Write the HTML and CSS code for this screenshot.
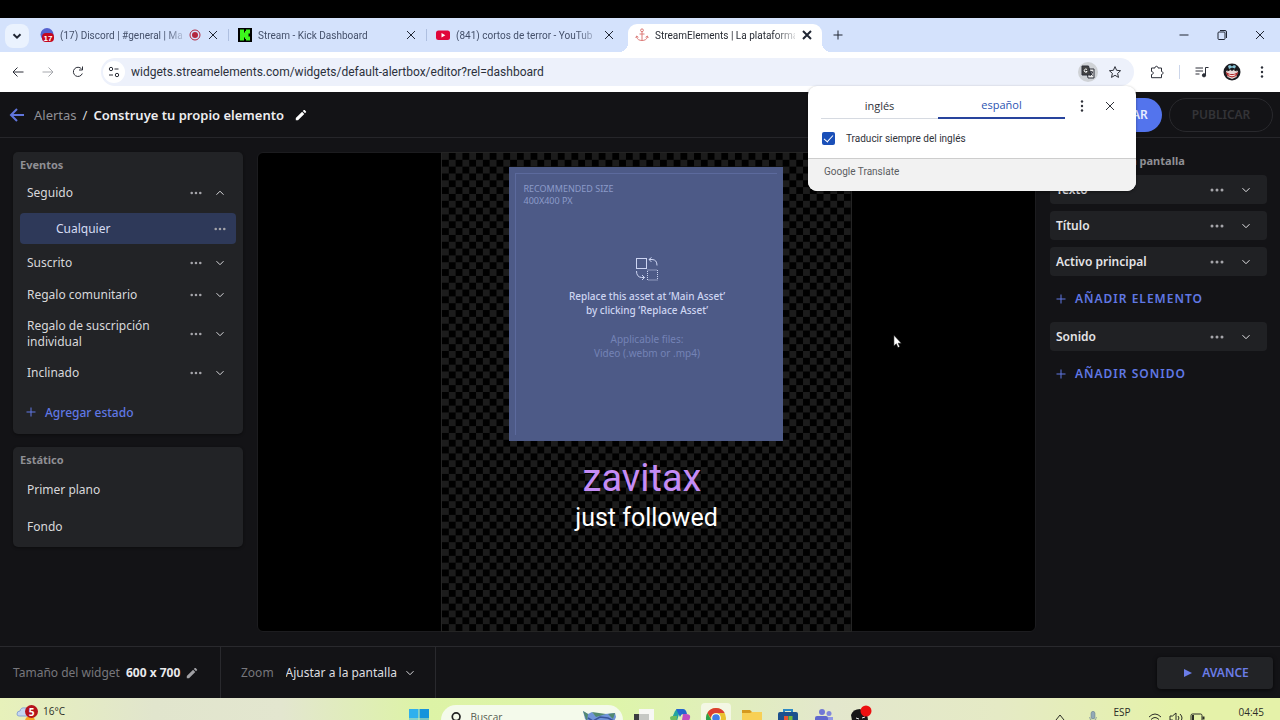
FILE: index.html
```html
<!DOCTYPE html>
<html lang="es">
<head>
<meta charset="utf-8">
<title>StreamElements | La plataforma</title>
<link rel="stylesheet" href="styles.css">
</head>
<body>
<svg class="defs" width="0" height="0" aria-hidden="true">
  <symbol id="x" viewBox="0 0 12 12"><path d="M2 2l8 8M10 2l-8 8"/></symbol>
  <symbol id="down" viewBox="0 0 12 12"><path d="M2.500 4.200L6 7.700l3.500-3.500"/></symbol>
  <symbol id="up" viewBox="0 0 12 12"><path d="M2.500 7.700L6 4.200l3.500 3.500"/></symbol>
  <symbol id="dots" viewBox="0 0 14 4"><g fill="currentColor" stroke="none"><circle cx="2" cy="2" r="1.500"/><circle cx="7" cy="2" r="1.500"/><circle cx="12" cy="2" r="1.500"/></g></symbol>
  <symbol id="vdots" viewBox="0 0 4 14"><g fill="currentColor" stroke="none"><circle cx="2" cy="2.500" r="1.200"/><circle cx="2" cy="7" r="1.200"/><circle cx="2" cy="11.500" r="1.200"/></g></symbol>
  <symbol id="plus" viewBox="0 0 12 12"><path d="M6 1.500v9M1.500 6h9"/></symbol>
  <symbol id="pencil" viewBox="0 0 12 12"><path fill="currentColor" stroke="none" d="M.8 9.100v2.200H3L9.300 5 7.100 2.800zM11 3.300c.3-.3.3-.6 0-.9L9.700 1.100c-.3-.3-.6-.3-.9 0L7.800 2.100 10 4.300z"/></symbol>
</svg>
<div class="screen">
  <div class="tabstrip">
    <button class="tab-search" aria-label="Buscar pestañas"><svg class="i12"><use href="#down"/></svg></button>
    <div class="tab">
      <svg class="fav" viewBox="0 0 14 14"><circle cx="7" cy="6.500" r="6.500" fill="#5662cf"/><rect x="2" y="5" width="12" height="9" rx="4" fill="#c4071f"/><text x="8" y="12.500" text-anchor="middle" class="fav-count">17</text></svg>
      <span class="tab-title">(17) Discord | #general | Ma</span>
      <svg class="rec" viewBox="0 0 12 12"><circle cx="6" cy="6" r="5" fill="none" stroke="#b3263e"/><circle cx="6" cy="6" r="3" fill="#b3263e"/></svg>
      <button class="close" aria-label="Cerrar"><svg class="i12"><use href="#x"/></svg></button>
    </div>
    <div class="tab">
      <svg class="fav" viewBox="0 0 14 14"><path fill="#000" d="M0 0h14v14H0z"/><path fill="#3df51d" d="M2 1.500h4v3h1V3h1V1.500h4v4h-1.500v3H12v4H8V11H7V9.500H6v3H2z"/></svg>
      <span class="tab-title">Stream - Kick Dashboard</span>
      <button class="close" aria-label="Cerrar"><svg class="i12"><use href="#x"/></svg></button>
    </div>
    <div class="tab plain">
      <svg class="fav" viewBox="0 0 14 14"><rect y="2.500" width="14" height="9.500" rx="2.500" fill="#e0063a"/><path fill="#fff" d="M5.500 5v4.500L9.300 7.200z"/></svg>
      <span class="tab-title">(841) cortos de terror - YouTub</span>
      <button class="close" aria-label="Cerrar"><svg class="i12"><use href="#x"/></svg></button>
    </div>
    <div class="tab active">
      <svg class="fav anchor" viewBox="0 0 14 14"><circle cx="7" cy="2.300" r="1.400"/><path d="M7 4v8.500M4.500 6h5M1.500 8.500c.5 3 3 4 5.500 4s5-1 5.500-4M.8 10l.8-2 1.800 1.300M13.200 10l-.8-2-1.800 1.300"/></svg>
      <span class="tab-title">StreamElements | La plataforma</span>
      <button class="close" aria-label="Cerrar"><svg class="i12"><use href="#x"/></svg></button>
    </div>
    <button class="new-tab" aria-label="Nueva pestaña"><svg class="i12"><use href="#plus"/></svg></button>
    <div class="window-controls">
      <button aria-label="Minimizar"><svg class="i12" viewBox="0 0 12 12"><path d="M1.500 6h9"/></svg></button>
      <button aria-label="Restaurar"><svg class="i12" viewBox="0 0 12 12"><rect x="2" y="3" width="7" height="7.500" rx="1"/><path d="M4 1.500h5q1.500 0 1.500 1.500v6"/></svg></button>
      <button aria-label="Cerrar ventana"><svg class="i12" viewBox="0 0 12 12"><path d="M2 2l8 8M10 2l-8 8"/></svg></button>
    </div>
  </div>

  <div class="toolbar">
    <button aria-label="Atrás"><svg class="i14" viewBox="0 0 14 14"><path d="M12.500 7H2M6.500 2.500L2 7l4.500 4.500"/></svg></button>
    <button class="off" aria-label="Adelante"><svg class="i14" viewBox="0 0 14 14"><path d="M1.500 7H12M7.500 2.500L12 7l-4.500 4.500"/></svg></button>
    <button aria-label="Recargar"><svg class="i14" viewBox="0 0 14 14"><path d="M11.300 8.500A4.600 4.600 0 1 1 10.600 4M11.500 1.500v3.500H8"/></svg></button>
    <div class="omnibox">
      <button class="site" aria-label="Información del sitio"><svg class="i14" viewBox="0 0 14 14"><circle cx="4" cy="4" r="1.700"/><path d="M7.500 4h4M2 10h4"/><circle cx="10" cy="10" r="1.700"/></svg></button>
      <input class="url" type="text" aria-label="Dirección" value="widgets.streamelements.com/widgets/default-alertbox/editor?rel=dashboard">
      <button class="translate" aria-label="Traducir"><svg class="i14" viewBox="0 0 14 14"><path d="M5.500 4h7.500v9H7z" fill="#ececec"/><path d="M1 1h6.500l2.500 9H1z" fill="#444"/><path d="M6 4.500a1.600 1.600 0 1 0 .2 2H4.800" stroke="#fff"/><path d="M8.500 7H12M10.200 6v1M11.500 7c-.3 1.500-1 2.600-2 3.500M9.500 8l2.300 2.700"/></svg></button>
      <button class="star" aria-label="Favorito"><svg class="i14" viewBox="0 0 14 14"><path d="M7 1.600l1.600 3.700 4 .4-3 2.700.9 4L7 10.300l-3.500 2.100.9-4-3-2.700 4-.4z"/></svg></button>
    </div>
    <button class="puzzle" aria-label="Extensiones"><svg class="i14" viewBox="0 0 14 14"><path d="M1.500 3H5c-.3-2.300 3.300-2.300 3 0h3.500v3.500c2 0 2 3 0 3v3.200h-10V9.500c2.300 0 2.300-3 0-3z"/></svg></button>
    <span class="bar-sep"></span>
    <button class="media" aria-label="Multimedia"><svg class="i14" viewBox="0 0 14 14"><path d="M.5 3h7.500M.5 6h7.500M.5 9h4M10.500 10V2.500h3"/><circle cx="9" cy="10.300" r="1.600" fill="currentColor"/></svg></button>
    <button class="avatar" aria-label="Perfil"><svg viewBox="0 0 18 18"><circle cx="9" cy="9" r="8.500" fill="#1a1b20"/><path d="M5 3l2-1 2 1.500L11 2l2 1-1 2.500L9 4.500 6 6z" fill="#86c4d6"/><path d="M3 8l4-1.500L9 8l2-1.500L15 8l-1.500 6L9 16l-4.500-2z" fill="#e8d9d7"/><path d="M2.500 9l4.500 2h4l4.500-2-2 4L9 14.500 4.500 13z" fill="#b22c2c"/><path d="M5.500 11.800l3.500 1 3.500-1" stroke="#fff"/><path d="M4.500 5.500l3 1.500-3 1.500zM13.500 5.500l-3 1.500 3 1.500z" fill="#151515"/></svg></button>
    <button aria-label="Menú"><svg class="v14"><use href="#vdots"/></svg></button>

    <section class="popup" aria-label="Traductor">
      <div class="popup-top">
        <div class="langs"><button>inglés</button><button class="sel">español</button></div>
        <button class="pbtn" aria-label="Opciones"><svg class="v14"><use href="#vdots"/></svg></button>
        <button class="pbtn" aria-label="Cerrar"><svg class="i12"><use href="#x"/></svg></button>
      </div>
      <label class="always"><input type="checkbox" checked><span>Traducir siempre del inglés</span></label>
      <div class="brand"><span>Google</span> Translate</div>
    </section>
  </div>

  <div class="app">
    <header class="head">
      <button class="back" aria-label="Volver"><svg viewBox="0 0 16 16"><path d="M15 8H2M8 2L2 8l6 6"/></svg></button>
      <nav class="crumbs"><a href="#">Alertas</a><span>/</span><h1>Construye tu propio elemento</h1></nav>
      <button class="edit" aria-label="Editar nombre"><svg class="i12"><use href="#pencil"/></svg></button>
      <div class="actions"><button class="save">GUARDAR</button><button class="publish" disabled>PUBLICAR</button></div>
    </header>

    <main class="work">
      <aside class="left">
        <section class="panel events">
          <h2>Eventos</h2>
          <div class="row"><span>Seguido</span><button aria-label="Más"><svg class="dots"><use href="#dots"/></svg></button><button aria-label="Contraer"><svg class="i12"><use href="#up"/></svg></button></div>
          <div class="row chosen"><span>Cualquier</span><button aria-label="Más"><svg class="dots"><use href="#dots"/></svg></button></div>
          <div class="row"><span>Suscrito</span><button aria-label="Más"><svg class="dots"><use href="#dots"/></svg></button><button aria-label="Expandir"><svg class="i12"><use href="#down"/></svg></button></div>
          <div class="row"><span>Regalo comunitario</span><button aria-label="Más"><svg class="dots"><use href="#dots"/></svg></button><button aria-label="Expandir"><svg class="i12"><use href="#down"/></svg></button></div>
          <div class="row tall"><span>Regalo de suscripción individual</span><button aria-label="Más"><svg class="dots"><use href="#dots"/></svg></button><button aria-label="Expandir"><svg class="i12"><use href="#down"/></svg></button></div>
          <div class="row"><span>Inclinado</span><button aria-label="Más"><svg class="dots"><use href="#dots"/></svg></button><button aria-label="Expandir"><svg class="i12"><use href="#down"/></svg></button></div>
          <button class="add state"><svg class="i12"><use href="#plus"/></svg>Agregar estado</button>
        </section>
        <section class="panel static">
          <h2>Estático</h2>
          <div class="row">Primer plano</div>
          <div class="row">Fondo</div>
        </section>
      </aside>

      <section class="canvas">
        <div class="stage">
          <div class="asset">
            <div class="frame">
              <p class="size">RECOMMENDED SIZE<br>400X400 PX</p>
              <svg class="swap" viewBox="0 0 24 24"><rect x="1.500" y="1.500" width="10" height="10"/><path d="M14 2.500h3q5 0 5 6M16.500.5l-2.500 2 2.500 2.500M1.500 14q0 6 5 6.500h3M7 18l2.500 2.500L7 23"/><rect x="12.500" y="13" width="10" height="10" stroke-dasharray="1 1"/></svg>
              <p class="replace">Replace this asset at ‘Main Asset’<br>by clicking ‘Replace Asset’</p>
              <p class="files">Applicable files:<br>Video (.webm or .mp4)</p>
            </div>
          </div>
          <p class="name">zavitax</p>
          <p class="msg">just followed</p>
        </div>
        <svg class="cursor" viewBox="0 0 10 16"><path d="M1 1v12l2.700-2.500 1.800 4.300 2-.9-1.800-4H9.300z" fill="#fff" stroke="#111" stroke-width=".6"/></svg>
      </section>

      <aside class="right">
        <h2>Elementos de la pantalla</h2>
        <div class="card"><span>Texto</span><button aria-label="Más"><svg class="dots"><use href="#dots"/></svg></button><button aria-label="Expandir"><svg class="i12"><use href="#down"/></svg></button></div>
        <div class="card"><span>Título</span><button aria-label="Más"><svg class="dots"><use href="#dots"/></svg></button><button aria-label="Expandir"><svg class="i12"><use href="#down"/></svg></button></div>
        <div class="card"><span>Activo principal</span><button aria-label="Más"><svg class="dots"><use href="#dots"/></svg></button><button aria-label="Expandir"><svg class="i12"><use href="#down"/></svg></button></div>
        <button class="add item"><svg class="i12"><use href="#plus"/></svg>AÑADIR ELEMENTO</button>
        <div class="card"><span>Sonido</span><button aria-label="Más"><svg class="dots"><use href="#dots"/></svg></button><button aria-label="Expandir"><svg class="i12"><use href="#down"/></svg></button></div>
        <button class="add item"><svg class="i12"><use href="#plus"/></svg>AÑADIR SONIDO</button>
      </aside>
    </main>

    <footer class="foot">
      <div class="cell widget"><span class="dim">Tamaño del widget</span><strong>600 x 700</strong><button aria-label="Editar tamaño"><svg class="i12"><use href="#pencil"/></svg></button></div>
      <div class="cell zoom"><label for="zoom" class="dim">Zoom</label><select id="zoom"><option>Ajustar a la pantalla</option></select><svg class="i12"><use href="#down"/></svg></div>
      <button class="preview"><svg viewBox="0 0 8 10"><path d="M0 1l8 4-8 4z"/></svg>AVANCE</button>
    </footer>
  </div>

  <div class="taskbar">
    <div class="weather"><svg viewBox="0 0 24 20"><path d="M1 10q0-3 3-3 1-4 5-3 4-1 5 3v5H3q-2 0-2-2" fill="#c5d7f0" stroke="#8ba6d4"/><circle cx="14" cy="17" r="5" fill="#f5a623"/><circle cx="15.500" cy="7.500" r="6.500" fill="#b5131c"/><text x="15.500" y="11.500" text-anchor="middle" class="badge">5</text></svg><span>16°C</span></div>
    <div class="dock">
      <svg class="win" viewBox="0 0 20 20"><path fill="#2fb0ee" d="M0 0h9.500v9.500H0zM0 10.500h9.500V20H0z"/><path fill="#1593dc" d="M10.500 0H20v9.500h-9.500zM10.500 10.500H20V20h-9.500z"/></svg>
      <label class="search"><svg viewBox="0 0 14 14"><circle cx="6" cy="5.500" r="4.500"/><path d="M9.500 9l3.500 4"/></svg><input type="text" placeholder="Buscar" aria-label="Buscar"><svg class="whale" viewBox="0 0 36 16"><path d="M1 1l5 3 4-2 3 3 20-2 1 4-4 9H10L3 9z" fill="#6f94d8"/><path d="M1 1l5 3-1 8zM10 2l4 5 10-3M26 4l7-1-2 6z" fill="#538a70"/><path d="M6 8l5 3 7-4 8 1 6 3M12 13l8-2 7 2" stroke="#39559c" fill="none" stroke-width="1.500"/></svg></label>
      <svg class="ic" viewBox="0 0 20 20"><path fill="#f7f7f5" d="M5 0h15v14H5z"/><path fill="#3b3d3f" d="M0 5h7v9H0z"/><path fill="#c6c8c5" d="M5 5h10v9H5z"/></svg>
      <svg class="ic" viewBox="0 0 20 20"><path d="M2 9L5 2q1-2 4-2h4q-3 1-4 5L7 12z" fill="#23a5a1"/><path d="M6 0h7q3 0 4 5h-4q-2 0-3 3z" fill="#2465cf"/><path d="M13 5h3q5 0 4 4l-3 8h-6z" fill="#c14dc1"/><path d="M0 9q0-2 3-2h4l-1 8H2z" fill="#70bd5d"/></svg>
      <span class="running"><svg class="ic" viewBox="0 0 20 20"><circle cx="10" cy="10" r="10" fill="#e9c22f"/><path d="M1.300 5A10 10 0 0 1 18.700 5H10a5 5 0 0 0-5 5z" fill="#db3e32"/><path d="M1.300 5L6 13l4 2-1 5A10 10 0 0 1 1.300 5" fill="#2da04c"/><circle cx="10" cy="10" r="4.800" fill="#fff"/><circle cx="10" cy="10" r="3.800" fill="#3f7de8"/></svg></span>
      <svg class="ic" viewBox="0 0 20 20"><path fill="#d59a1f" d="M0 1h8l2 2h10v6H0z"/><path fill="#f8d055" d="M0 4h8l2-1h10v14H0z"/></svg>
      <svg class="ic" viewBox="0 0 20 20"><path d="M6 4V1h8v3" fill="none" stroke="#2c89c6" stroke-width="2"/><rect y="3" width="20" height="15" rx="2" fill="#1c508d"/><path fill="#e75432" d="M6 7h4v4H6z"/><path fill="#73ba3a" d="M10.500 7h4v4h-4z"/><path fill="#32a6e7" d="M6 11.500h8V15H6z"/></svg>
      <svg class="ic" viewBox="0 0 20 20"><circle cx="8" cy="3" r="3" fill="#7077d5"/><circle cx="15" cy="4.500" r="2.500" fill="#8086dc"/><path d="M1 16V9q0-2 2-2h9q2 0 2 2v7z" fill="#6068ce"/><path d="M14 8h5v8h-5z" fill="#9298e4"/></svg>
      <svg class="ic wide" viewBox="0 0 22 22"><path d="M3 20L1 9q2-6 9-6l7 5 2 12z" fill="#171717"/><path d="M6 12l3 1M12 12l3-1" stroke="#eee"/><circle cx="16" cy="5" r="5.500" fill="#ec1010"/></svg>
    </div>
    <div class="tray">
      <svg class="i12" viewBox="0 0 12 12"><path d="M2 9l4-5 4 5"/></svg>
      <svg class="i12" viewBox="0 0 12 16"><rect x="3.500" y=".5" width="5" height="10" rx="2.500" fill="#91a8b7" stroke="#708795"/><path d="M1.500 8q0 5 4.500 5t4.500-5" stroke="#708795"/></svg>
      <span>ESP</span>
      <svg class="i14" viewBox="0 0 14 14"><path d="M1 6q6-6 12 0M3 8.500q4-4 8 0M5 11q2-2 4 0"/></svg>
      <svg class="i14" viewBox="0 0 14 14"><path d="M1 5h2.500L7 2v10L3.500 9H1zM9 5q2 2 0 4M11 3q4 4 0 8"/></svg>
      <svg class="i14" viewBox="0 0 14 14"><rect x="1" y="3" width="11" height="8" rx="1.500"/><path d="M3 4v6M13.500 5.500v3" stroke-width="2"/></svg>
      <time>04:45</time>
    </div>
  </div>
</div>
</body>
</html>
```
FILE: styles.css
```css
* { box-sizing: border-box; }
body { margin: 0; background: #000; font-family: "Noto Sans", "Open Sans", sans-serif; font-size: 12px; }
h1, h2, p { margin: 0; }
button { border: 0; padding: 0; background: none; color: inherit; font: inherit; display: flex; align-items: center; justify-content: center; flex: none; }
svg { display: block; flex: none; fill: none; stroke: currentColor; overflow: visible; }
.defs { position: absolute; }
symbol { overflow: visible; }
.i12 { width: 12px; height: 12px; }
.i14 { width: 14px; height: 14px; }
.v14 { width: 4px; height: 14px; }

.screen { height: 100vh; padding-top: 18px; display: flex; flex-direction: column; overflow: hidden; }

/* browser tabs */
.tabstrip { height: 34px; flex: none; display: flex; align-items: flex-end; background: #d4e2fc; color: #202633; font-family: Roboto, sans-serif; font-size: 10px; padding-left: 5px; }
.tab-search { width: 24px; height: 24px; margin: 0 2px 4px 0; border-radius: 8px; background: #eaf2fe; stroke-width: 2; }
.tab { position: relative; width: 198px; height: 28px; margin-bottom: 3px; padding: 0 10px 0 9px; display: flex; align-items: center; gap: 6px; }
.tab:not(.active):not(.plain)::after { content: ""; position: absolute; right: 0; top: 8px; width: 1px; height: 12px; background: #aebfe0; }
.fav { width: 14px; height: 14px; stroke: none; }
.anchor { stroke: #dc7b78; }
.fav-count { font: bold 8px "Liberation Sans", sans-serif; fill: #fff; }
.tab-title { flex: 1; min-width: 0; white-space: nowrap; color: #44506a; -webkit-mask-image: linear-gradient(90deg, #000 85%, #0003); mask-image: linear-gradient(90deg, #000 85%, #0003); }
.rec { width: 12px; height: 12px; stroke: none; }
.close svg { stroke-width: 1; }
.tab.active { width: 194px; height: 28px; margin: 0 0 0 3px; padding: 0 9px 6px 7px; background: #fff; border-radius: 9px 9px 0 0; }
.tab.active::before { content: ""; position: absolute; inset: auto -9px 0 -9px; height: 9px; background: radial-gradient(circle at 0 0, transparent 9px, #fff 9px) left / 9px 9px no-repeat, radial-gradient(circle at 100% 0, transparent 9px, #fff 9px) right / 9px 9px no-repeat; }
.tab.active .tab-title { color: #272b33; }
.tab.active .close svg { stroke-width: 2; }
.new-tab { width: 32px; height: 28px; margin-bottom: 3px; }
.window-controls { margin: 0 14px 11px auto; display: flex; gap: 26px; }

/* browser toolbar */
.toolbar { position: relative; z-index: 5; height: 40px; flex: none; display: flex; align-items: center; background: #fff; color: #2c2f38; padding: 0 3px; }
.toolbar > button { width: 30px; height: 28px; }
.toolbar > .off { color: #a6a8ad; }
.omnibox { flex: 1; height: 28px; margin-left: 8px; display: flex; align-items: center; background: #edf1fb; border-radius: 14px; padding: 0 12px 0 2px; }
.site { width: 22px; height: 22px; border-radius: 50%; background: #fff; }
.url { flex: 1; min-width: 0; border: 0; background: none; padding: 0 0 0 6px; color: #2b303b; font: 12px Roboto, sans-serif; }
.translate { width: 20px; height: 20px; border-radius: 50%; background: #cfd2d6; }
.star { width: 14px; margin-left: 10px; }
.toolbar > .puzzle { margin-left: 8px; }
.bar-sep { width: 1px; height: 14px; margin: 0 7px; background: #ccd6ea; }
.avatar svg { width: 18px; height: 18px; stroke: none; }

/* translation popup hangs from the toolbar */
.popup { position: absolute; top: 34px; right: 144px; width: 328px; border-radius: 9px; background: #fff; color: #30323a; overflow: hidden; box-shadow: 0 1px 3px #0006; font-family: Roboto, sans-serif; font-size: 10px; }
.popup-top { display: flex; align-items: flex-start; padding-left: 13px; }
.langs { width: 244px; display: grid; grid-template-columns: 117px 1fr; font-family: "Open Sans", sans-serif; font-size: 11px; }
.langs button { height: 33px; padding-top: 6px; border-bottom: 1px solid #d6dae1; }
.langs .sel { color: #2b54b2; border-bottom: 2px solid #28449d; }
.pbtn { width: 28px; height: 33px; padding-top: 6px; margin-left: 3px; }
.pbtn + .pbtn { margin-left: 0; }
.always { height: 39px; display: flex; align-items: center; gap: 11px; padding-left: 14px; }
.always input { appearance: none; width: 13px; height: 13px; margin: 0; border-radius: 2px; background: #1a4fb8; display: grid; place-items: center; }
.always input::after { content: ""; width: 4px; height: 8px; margin-bottom: 2px; border: solid #fff; border-width: 0 1px 1px 0; transform: rotate(42deg); }
.brand { height: 33px; padding: 7px 16px; border-top: 1px solid #cdcdcd; background: #f2f2f2; color: #5b5d61; }

/* widget editor */
.app { flex: 1; min-height: 0; display: flex; flex-direction: column; background: #131316; color: #d8d8db; }
.head { height: 46px; flex: none; display: flex; align-items: center; padding: 0 7px 0 8px; border-bottom: 1px solid #26262a; }
.back { color: #6075db; width: 17px; }
.back svg { width: 16px; height: 16px; stroke-width: 2; }
.crumbs { display: flex; gap: 6px; align-items: center; margin-left: 9px; font-size: 13px; }
.crumbs a { color: #909095; text-decoration: none; }
.crumbs h1 { font-size: 13px; font-weight: 600; color: #ededf0; }
.edit { margin-left: 11px; color: #fff; }
.actions { display: flex; gap: 7px; margin-left: auto; font-size: 12px; font-weight: 600; letter-spacing: 1px; }
.actions button { height: 34px; border-radius: 17px; }
.save { width: 86px; background: #5374ed; color: #e7edff; }
.actions .publish { width: 104px; border: 1px solid #29292d; color: #333337; }

.work { flex: 1; min-height: 0; display: grid; grid-template-columns: 230px 1fr 217px; gap: 14px; padding: 14px 13px; }
h2 { font-size: 11px; font-weight: 700; color: #8f8f94; }
.left { display: flex; flex-direction: column; gap: 13px; }
.panel { background: #222326; border-radius: 5px; padding: 0 7px; box-shadow: 0 1px 3px #0006; }
.panel h2 { height: 26px; line-height: 26px; }
.events { padding-bottom: 7px; }
.row { min-height: 32px; display: flex; align-items: center; gap: 12px; padding: 0 10px 0 7px; line-height: 16px; }
.row span, .card span { flex: 1; }
h2 + .row { min-height: 30px; }
.dots { width: 12px; height: 4px; color: #a5a5aa; }
.row .i12, .card .i12 { stroke-width: 1; }
.chosen { min-height: 31px; margin: 5px 0 3px; padding: 0 10px 0 36px; border-radius: 4px; background: #2e3959; color: #d5dcf4; }
.tall { min-height: 46px; }
.tall span { max-width: 130px; }
.tall button:first-of-type { margin-left: auto; }
.add { color: #6078e4; font-weight: 600; }
.add svg { margin-right: 8px; }
.state { height: 30px; margin-top: 8px; padding-left: 5px; font-weight: 500; }
.static { padding-bottom: 2px; }
.panel.static h2 { height: 24px; }
.static h2 ~ .row { min-height: 37px; }

.canvas { position: relative; display: flex; justify-content: center; min-height: 0; background: #000; border: 1px solid #1c1c1f; border-radius: 6px; }
.stage { height: 100%; aspect-ratio: 600 / 700; background: repeating-conic-gradient(#000 0 25%, #1c1c1c 0 50%) 0 0 / calc(100% / 30) calc(100% / 35); outline: 1px solid #242424; display: flex; flex-direction: column; align-items: center; padding-top: 14px; }
.asset { width: 274px; height: 274px; flex: none; background: #4d5a87; padding: 6px; color: #cdd5f2; font-size: 10px; line-height: 14px; text-align: center; }
.frame { height: 100%; border: solid #5c6a9d; border-width: 1px 0 0 1px; display: flex; flex-direction: column; align-items: center; }
.size { align-self: flex-start; margin: 9px 0 0 7px; font-size: 9px; line-height: 12px; text-align: left; color: #8c9ac9; }
.swap { width: 24px; height: 24px; margin-top: 50px; }
.replace { margin-top: 8px; font-weight: 500; }
.files { margin-top: 15px; color: #7483b6; }
.name { margin-top: 15px; padding-right: 9px; color: #c58cf6; font: 38px/45px Roboto, sans-serif; }
.msg { color: #fff; font: 25px/34px Roboto, sans-serif; }
.cursor { position: absolute; left: 635px; top: 181px; width: 9px; height: 15px; }

.right h2 { height: 17px; line-height: 17px; margin-bottom: 6px; }
.card { height: 29px; margin-bottom: 7px; display: flex; align-items: center; gap: 16px; padding: 0 15px 0 6px; border-radius: 4px; background: #202124; color: #e4e4e7; font-weight: 600; }
.card .dots { width: 14px; }
.item { height: 31px; margin-bottom: 8px; padding-left: 5px; letter-spacing: 1px; }

.foot { height: 52px; flex: none; display: flex; border-top: 1px solid #29292d; padding-right: 7px; }
.cell { display: flex; align-items: center; border-right: 1px solid #29292d; }
.dim { color: #77777c; }
.widget { width: 221px; padding-left: 13px; gap: 6px; }
.widget strong { color: #e9e9ec; }
.widget button { color: #a0a0a4; }
.zoom { width: 215px; padding-left: 20px; }
.zoom select { appearance: none; border: 0; background: none; color: #dedee1; font: inherit; padding: 0; margin: 0 6px 0 12px; }
.preview { width: 116px; height: 32px; margin: auto 0 auto auto; gap: 10px; padding-left: 3px; border-radius: 4px; background: #222326; color: #6b7de8; font-weight: 600; box-shadow: 0 1px 4px #000a; }
.preview svg { width: 8px; height: 10px; fill: currentColor; stroke: none; }

/* desktop taskbar, cut by the lower edge of the screen */
.taskbar { height: 22px; flex: none; overflow: hidden; display: grid; grid-template-columns: 1fr auto 1fr; align-items: start; background: linear-gradient(90deg, #e7f1ba, #e1e5cd 12%, #e3e6cf 22%, #ddf3a6 33%, #def5aa 48%, #e3e7cd 65%, #e5eac5 78%, #e5f2a9 92%); color: #2b2d27; font-family: "Open Sans", sans-serif; font-size: 10px; line-height: 14px; }
.weather { display: flex; gap: 3px; padding: 6px 0 0 16px; }
.weather svg { width: 24px; height: 20px; stroke: none; }
.badge { font: bold 10px "Open Sans", sans-serif; fill: #fff; }
.dock { display: flex; align-items: flex-start; gap: 16px; padding-top: 11px; }
.dock svg { stroke: none; }
.win { width: 20px; height: 20px; }
.search { width: 182px; height: 30px; margin: -4px -5px 0 -4px; border-radius: 15px; background: #f4faeb; display: flex; padding: 5px 5px 0 10px; gap: 8px; }
.search svg { width: 12px; height: 14px; margin-top: 1px; stroke: #222; stroke-width: 2; }
.search input { flex: 1; min-width: 0; height: 14px; border: 0; padding: 0; background: none; font: 10px/14px "Open Sans", sans-serif; }
.search input::placeholder { color: #55594f; }
.search .whale { width: 36px; height: 18px; margin-top: -1px; stroke: none; }
.ic { width: 20px; height: 20px; }
.wide { width: 22px; height: 22px; margin-top: -3px; }
.running { margin: -6px -5px 0; padding: 5px; background: #f3f7e4; border-radius: 4px; }
.tray { display: flex; justify-content: flex-end; gap: 7px; padding: 7px 16px 0 0; }
.tray svg { margin-top: 6px; }
.tray svg:first-child { margin-right: 14px; }
.tray span { margin: 0 10px 0 7px; }
.tray time { margin-left: 28px; }
```
